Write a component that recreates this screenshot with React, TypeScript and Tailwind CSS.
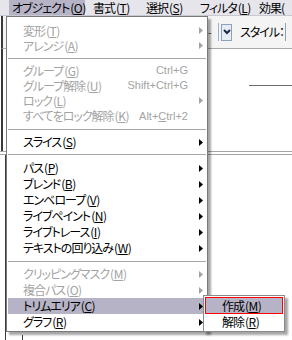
import React from "react";

type Row =
  | { sep: true; h: number; line: number }
  | {
      sep?: false;
      label: string;
      k: string;
      dis?: boolean;
      sc?: React.ReactNode;
      arrow?: boolean;
      hl?: boolean;
      h: number;
    };

const rows: Row[] = [
  { label: "変形", k: "T", dis: true, arrow: true, h: 15 },
  { label: "アレンジ", k: "A", dis: true, arrow: true, h: 15 },
  { sep: true, h: 10, line: 5 },
  { label: "グループ", k: "G", dis: true, sc: "Ctrl+G", h: 15 },
  { label: "グループ解除", k: "U", dis: true, sc: "Shift+Ctrl+G", h: 15 },
  { label: "ロック", k: "L", dis: true, arrow: true, h: 15 },
  {
    label: "すべてをロック解除",
    k: "K",
    dis: true,
    sc: (
      <>
        Alt+<span className="underline">C</span>trl+2
      </>
    ),
    h: 16,
  },
  { sep: true, h: 10, line: 5 },
  { label: "スライス", k: "S", arrow: true, h: 16 },
  { sep: true, h: 10, line: 4 },
  { label: "パス", k: "P", arrow: true, h: 16 },
  { label: "ブレンド", k: "B", arrow: true, h: 16 },
  { label: "エンベロープ", k: "V", arrow: true, h: 16 },
  { label: "ライブペイント", k: "N", arrow: true, h: 16 },
  { label: "ライブトレース", k: "I", arrow: true, h: 16 },
  { label: "テキストの回り込み", k: "W", arrow: true, h: 16 },
  { sep: true, h: 10, line: 5 },
  { label: "クリッピングマスク", k: "M", dis: true, arrow: true, h: 16 },
  { label: "複合パス", k: "O", dis: true, arrow: true, h: 16 },
  { label: "トリムエリア", k: "C", arrow: true, hl: true, h: 16 },
  { label: "グラフ", k: "R", arrow: true, h: 16 },
];

function Arrow({ dis }: { dis?: boolean }) {
  return (
    <svg width="4" height="7" viewBox="0 0 4 7">
      <path d="M0 0 L4 3.5 L0 7 Z" fill={dis ? "#a3a3a3" : "#000"} />
    </svg>
  );
}

function Label({ label, k }: { label: string; k: string }) {
  return (
    <span className="whitespace-nowrap">
      <span className="tracking-[-1px]">{label}</span>
      <span className="ml-[1px] tracking-[-0.5px]">
        (<span className="underline">{k}</span>)
      </span>
    </span>
  );
}

export default function App() {
  return (
    <div className="relative w-[292px] h-[340px] overflow-hidden bg-white text-[12px] leading-none text-black font-['Noto_Sans_CJK_JP',sans-serif] [font-feature-settings:'palt']">
      {/* menubar */}
      <div className="h-[16px] bg-[#e6e5ec] border-b border-[#c8c8d0] flex items-stretch pl-[9px]">
        <div className="bg-[#b6b3c6] flex items-center pl-[3px] w-[76px] shrink-0">
          <Label label="オブジェクト" k="O" />
        </div>
        <div className="flex items-center pl-[8px] w-[53px] shrink-0">
          <Label label="書式" k="T" />
        </div>
        <div className="flex items-center pl-[8px] w-[54px] shrink-0">
          <Label label="選択" k="S" />
        </div>
        <div className="flex items-center pl-[8px] w-[59px] shrink-0">
          <Label label="フィルタ" k="L" />
        </div>
        <div className="flex items-center pl-[8px] whitespace-nowrap tracking-[-1px]">効果(</div>
      </div>

      {/* toolbar */}
      <div className="h-[33px] ml-[1px] border-l-2 border-l-[#3a3a3a] bg-[#f4f4f4] border-b border-b-[#a9a9a9] flex items-center pl-[205px]">
        <span className="text-[#333] w-[6px] text-[10px]">-</span>
        <div className="w-[5px] h-[18px] border-r border-[#9fb0c8]" />
        <div className="ml-[2px] w-[11px] h-[17px] border border-[#8fa0bc] bg-[#e8ecf4] flex items-center justify-center">
          <svg width="8" height="6" viewBox="0 0 8 6">
            <path d="M1 1 L4 4 L7 1" stroke="#1b2a4a" strokeWidth="2" fill="none" />
          </svg>
        </div>
        <span className="ml-[8px] whitespace-nowrap tracking-[-1px]">スタイル：</span>
        <div className="ml-[1px] h-[18px] border-l border-[#8fa0bc] w-[4px]" />
      </div>

      {/* canvas section 1 */}
      <div className="h-[102px] border-l-2 border-[#3a3a3a] ml-[1px] flex flex-col">
        <div className="mt-[36px] ml-auto w-[43px] border-t border-[#6e6e6e]" />
      </div>
      {/* double line */}
      <div className="h-[4px] border-y border-[#a6a6a6]" />
      {/* canvas section 2 */}
      <div className="h-[186px] ml-[5px] border-l border-[#3a3a3a] flex flex-col justify-end">
        <div className="ml-[16px] h-[6px] border-l border-[#3a3a3a]" />
      </div>

      {/* dropdown menu */}
      <div className="absolute left-[6px] top-[16px] w-[202px] h-[316px] bg-white border border-[#7a7a7a] pt-[6px] shadow-[3px_3px_2px_rgba(0,0,0,0.35)]">
        {rows.map((r, i) =>
          r.sep ? (
            <div key={i} className="flex flex-col px-[1px]" style={{ height: r.h }}>
              <div style={{ height: r.line }} />
              <div className="border-t border-[#a8a8a8]" />
            </div>
          ) : (
            <div
              key={i}
              className={
                "flex items-center pl-[15px] pr-[3px] mx-[1px] " +
                (r.hl ? "bg-[#b6b3c6] " : "") +
                (r.dis ? "text-[#a3a3a3]" : "text-black")
              }
              style={{ height: r.h }}
            >
              <Label label={r.label} k={r.k} />
              <div className="flex-1" />
              {r.sc ? <span className="whitespace-nowrap mr-[15px] font-['Liberation_Sans',sans-serif] text-[11px]">{r.sc}</span> : null}
              {r.arrow ? <Arrow dis={r.dis} /> : null}
            </div>
          )
        )}
      </div>

      {/* submenu */}
      <div className="absolute left-[203px] top-[295px] w-[82px] h-[37px] bg-white border border-[#8a8a8a] p-[1px] shadow-[3px_3px_2px_rgba(0,0,0,0.35)]">
        <div className="h-[17px] bg-[#b6b3c6] border border-[#ff0000] flex items-center pl-[16px]">
          <Label label="作成" k="M" />
        </div>
        <div className="h-[16px] flex items-center pl-[17px]">
          <Label label="解除" k="R" />
        </div>
      </div>
    </div>
  );
}
